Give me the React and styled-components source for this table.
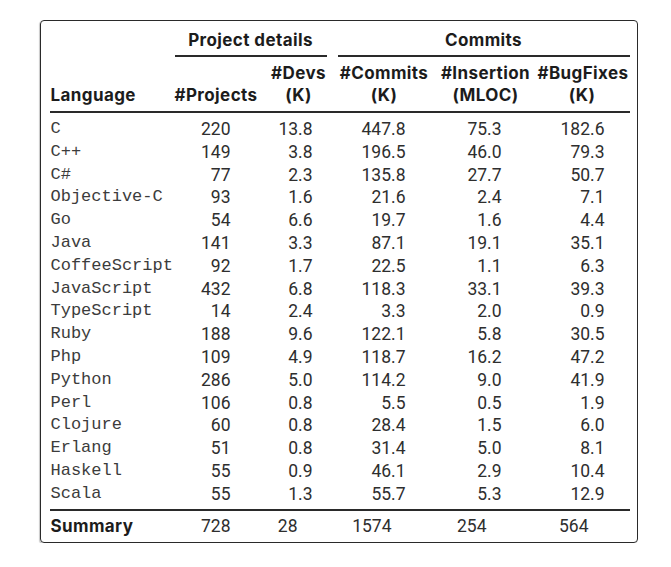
import React from "react";
import styled, { createGlobalStyle } from "styled-components";

const GlobalStyle = createGlobalStyle`
  html, body { margin: 0; padding: 0; background: #ffffff; }
`;

const Card = styled.div`
  box-sizing: border-box;
  margin: 20px 0 0 40px;
  width: 598px;
  height: 523px;
  border: 1.5px solid #2a2a2a;
  border-radius: 4px;
  box-shadow: -1px 1px 1px rgba(0, 0, 0, 0.22);
  padding: 9px 0 0 8.5px;
`;

const Table = styled.div`
  display: grid;
  grid-template-columns: 120px 93px 72px 99px 104px 89px 3px;
  width: 580px;
`;

const Row = styled.div`
  display: contents;
`;

const headFont = `
  font-family: Inter, "Liberation Sans", sans-serif;
  font-weight: 700;
  font-size: 17px;
  letter-spacing: 0.4px;
  color: #1c1c1c;
  white-space: nowrap;
`;

const GroupHead = styled.div`
  ${headFont}
  grid-column: ${(p) => p.$span};
  margin-left: ${(p) => p.$ml}px;
  margin-right: ${(p) => p.$mr}px;
  line-height: 20px;
  padding-bottom: 5px;
  border-bottom: 2px solid #2a2a2a;
  text-align: center;
`;

const Spacer = styled.div``;

const ColHead = styled.div`
  ${headFont}
  margin-top: 4.5px;
  line-height: 22px;
  align-self: end;
  text-align: ${(p) => (p.$left ? "left" : "center")};
  padding-left: ${(p) => (p.$left ? "1px" : "0")};
`;

const Rule = styled.div`
  grid-column: 1 / -1;
  height: 2px;
  background: #2a2a2a;
  margin-top: ${(p) => p.$mt}px;
`;

const LangCell = styled.div`
  font-family: "Liberation Mono", monospace;
  font-size: 17px;
  line-height: 22.8px;
  color: #3c3c3c;
  padding-left: 1px;
  white-space: nowrap;
  margin-top: ${(p) => (p.$first ? "5.6px" : "0")};
`;

const NumCell = styled.div`
  font-family: Roboto, "Liberation Sans", sans-serif;
  font-size: 17.5px;
  line-height: 22.8px;
  color: #2e2e2e;
  text-align: right;
  padding-right: ${(p) => p.$pr}px;
  white-space: nowrap;
  margin-top: ${(p) => (p.$first ? "5.6px" : "0")};
`;

const SumLabel = styled.div`
  ${headFont}
  padding: 4.5px 0 0 1px;
  line-height: 22px;
`;

const SumCell = styled.div`
  font-family: Roboto, "Liberation Sans", sans-serif;
  font-size: 17.5px;
  line-height: 22px;
  padding-top: 4.5px;
  color: #2e2e2e;
  text-align: right;
  padding-right: ${(p) => p.$pr}px;
`;

const PAD = [32, 22, 28, 36, 22];
const SUM_PAD = [32, 37, 42, 51, 38];

const data = [
  ["C", "220", "13.8", "447.8", "75.3", "182.6"],
  ["C++", "149", "3.8", "196.5", "46.0", "79.3"],
  ["C#", "77", "2.3", "135.8", "27.7", "50.7"],
  ["Objective-C", "93", "1.6", "21.6", "2.4", "7.1"],
  ["Go", "54", "6.6", "19.7", "1.6", "4.4"],
  ["Java", "141", "3.3", "87.1", "19.1", "35.1"],
  ["CoffeeScript", "92", "1.7", "22.5", "1.1", "6.3"],
  ["JavaScript", "432", "6.8", "118.3", "33.1", "39.3"],
  ["TypeScript", "14", "2.4", "3.3", "2.0", "0.9"],
  ["Ruby", "188", "9.6", "122.1", "5.8", "30.5"],
  ["Php", "109", "4.9", "118.7", "16.2", "47.2"],
  ["Python", "286", "5.0", "114.2", "9.0", "41.9"],
  ["Perl", "106", "0.8", "5.5", "0.5", "1.9"],
  ["Clojure", "60", "0.8", "28.4", "1.5", "6.0"],
  ["Erlang", "51", "0.8", "31.4", "5.0", "8.1"],
  ["Haskell", "55", "0.9", "46.1", "2.9", "10.4"],
  ["Scala", "55", "1.3", "55.7", "5.3", "12.9"],
];

const summary = ["728", "28", "1574", "254", "564"];

const headers = [
  ["#Projects"],
  ["#Devs", "(K)"],
  ["#Commits", "(K)"],
  ["#Insertion", "(MLOC)"],
  ["#BugFixes", "(K)"],
];

export default function App() {
  return (
    <>
      <GlobalStyle />
      <Card>
        <Table>
          <Row>
            <Spacer />
            <GroupHead $span="2 / 4" $ml={5} $mr={8}>
              Project details
            </GroupHead>
            <GroupHead $span="4 / 8" $ml={3} $mr={0}>
              Commits
            </GroupHead>
          </Row>
          <Row>
            <ColHead $left>Language</ColHead>
            {headers.map((h) => (
              <ColHead key={h[0]}>
                {h.map((line, i) => (
                  <div key={i}>{line}</div>
                ))}
              </ColHead>
            ))}
            <Spacer />
          </Row>
          <Rule $mt={5} />
          {data.map((r, ri) => (
            <Row key={r[0]}>
              <LangCell $first={ri === 0}>{r[0]}</LangCell>
              {r.slice(1).map((v, i) => (
                <NumCell key={i} $pr={PAD[i]} $first={ri === 0}>
                  {v}
                </NumCell>
              ))}
              <Spacer />
            </Row>
          ))}
          <Rule $mt={3} />
          <Row>
            <SumLabel>Summary</SumLabel>
            {summary.map((v, i) => (
              <SumCell key={i} $pr={SUM_PAD[i]}>
                {v}
              </SumCell>
            ))}
            <Spacer />
          </Row>
        </Table>
      </Card>
    </>
  );
}
